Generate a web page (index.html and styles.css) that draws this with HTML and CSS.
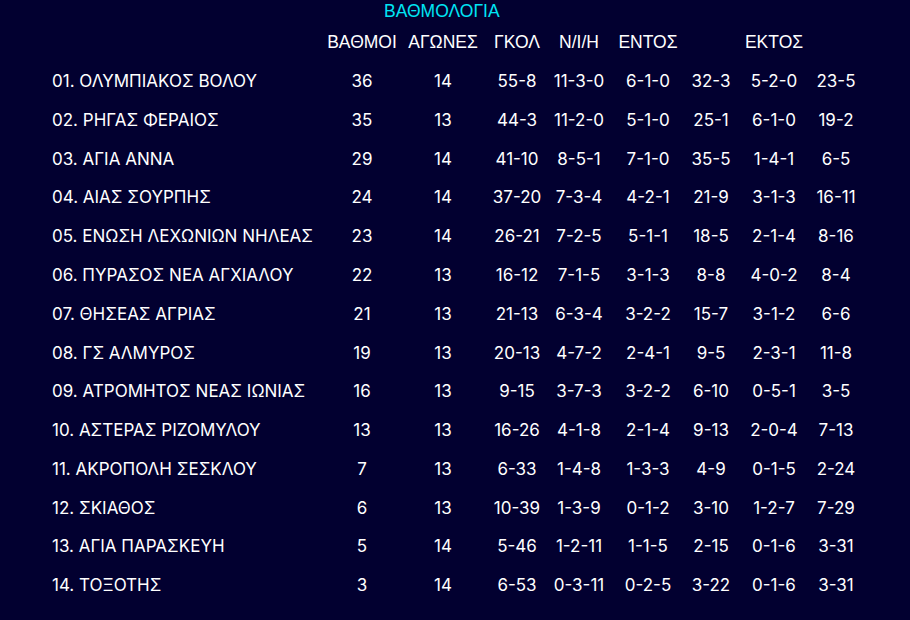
FILE: index.html
```html
<!DOCTYPE html>
<html lang="el">
<head>
<meta charset="utf-8">
<title>ΒΑΘΜΟΛΟΓΙΑ</title>
<link rel="stylesheet" href="styles.css">
</head>
<body>
<div class="title">ΒΑΘΜΟΛΟΓΙΑ</div>
<div class="standings">
  <div class="row head">
    <span class="name"></span><span>ΒΑΘΜΟΙ</span><span>ΑΓΩΝΕΣ</span><span>ΓΚΟΛ</span><span>Ν/Ι/Η</span><span>ΕΝΤΟΣ</span><span></span><span>ΕΚΤΟΣ</span><span></span>
  </div>
  <div class="row"><span class="name">01. ΟΛΥΜΠΙΑΚΟΣ ΒΟΛΟΥ</span><span>36</span><span>14</span><span>55-8</span><span>11-3-0</span><span>6-1-0</span><span>32-3</span><span>5-2-0</span><span>23-5</span></div>
  <div class="row"><span class="name">02. ΡΗΓΑΣ ΦΕΡΑΙΟΣ</span><span>35</span><span>13</span><span>44-3</span><span>11-2-0</span><span>5-1-0</span><span>25-1</span><span>6-1-0</span><span>19-2</span></div>
  <div class="row"><span class="name">03. ΑΓΙΑ ΑΝΝΑ</span><span>29</span><span>14</span><span>41-10</span><span>8-5-1</span><span>7-1-0</span><span>35-5</span><span>1-4-1</span><span>6-5</span></div>
  <div class="row"><span class="name">04. ΑΙΑΣ ΣΟΥΡΠΗΣ</span><span>24</span><span>14</span><span>37-20</span><span>7-3-4</span><span>4-2-1</span><span>21-9</span><span>3-1-3</span><span>16-11</span></div>
  <div class="row"><span class="name">05. ΕΝΩΣΗ ΛΕΧΩΝΙΩΝ ΝΗΛΕΑΣ</span><span>23</span><span>14</span><span>26-21</span><span>7-2-5</span><span>5-1-1</span><span>18-5</span><span>2-1-4</span><span>8-16</span></div>
  <div class="row"><span class="name">06. ΠΥΡΑΣΟΣ ΝΕΑ ΑΓΧΙΑΛΟΥ</span><span>22</span><span>13</span><span>16-12</span><span>7-1-5</span><span>3-1-3</span><span>8-8</span><span>4-0-2</span><span>8-4</span></div>
  <div class="row"><span class="name">07. ΘΗΣΕΑΣ ΑΓΡΙΑΣ</span><span>21</span><span>13</span><span>21-13</span><span>6-3-4</span><span>3-2-2</span><span>15-7</span><span>3-1-2</span><span>6-6</span></div>
  <div class="row"><span class="name">08. ΓΣ ΑΛΜΥΡΟΣ</span><span>19</span><span>13</span><span>20-13</span><span>4-7-2</span><span>2-4-1</span><span>9-5</span><span>2-3-1</span><span>11-8</span></div>
  <div class="row"><span class="name">09. ΑΤΡΟΜΗΤΟΣ ΝΕΑΣ ΙΩΝΙΑΣ</span><span>16</span><span>13</span><span>9-15</span><span>3-7-3</span><span>3-2-2</span><span>6-10</span><span>0-5-1</span><span>3-5</span></div>
  <div class="row"><span class="name">10. ΑΣΤΕΡΑΣ ΡΙΖΟΜΥΛΟΥ</span><span>13</span><span>13</span><span>16-26</span><span>4-1-8</span><span>2-1-4</span><span>9-13</span><span>2-0-4</span><span>7-13</span></div>
  <div class="row"><span class="name">11. ΑΚΡΟΠΟΛΗ ΣΕΣΚΛΟΥ</span><span>7</span><span>13</span><span>6-33</span><span>1-4-8</span><span>1-3-3</span><span>4-9</span><span>0-1-5</span><span>2-24</span></div>
  <div class="row"><span class="name">12. ΣΚΙΑΘΟΣ</span><span>6</span><span>13</span><span>10-39</span><span>1-3-9</span><span>0-1-2</span><span>3-10</span><span>1-2-7</span><span>7-29</span></div>
  <div class="row"><span class="name">13. ΑΓΙΑ ΠΑΡΑΣΚΕΥΗ</span><span>5</span><span>14</span><span>5-46</span><span>1-2-11</span><span>1-1-5</span><span>2-15</span><span>0-1-6</span><span>3-31</span></div>
  <div class="row"><span class="name">14. ΤΟΞΟΤΗΣ</span><span>3</span><span>14</span><span>6-53</span><span>0-3-11</span><span>0-2-5</span><span>3-22</span><span>0-1-6</span><span>3-31</span></div>
</div>
</body>
</html>
```
FILE: styles.css
```css
html, body {
  margin: 0;
  padding: 0;
  background: #020030;
  height: 100%;
}
body {
  color: #ffffff;
  font-family: "Liberation Sans", Arial, sans-serif;
}
.title {
  height: 23px;
  line-height: 22px;
  font-size: 17.5px;
  color: #00e5f5;
  padding-left: 384px;
}
.standings {
  margin-left: 48px;
  width: 810px;
}
.row {
  display: grid;
  grid-template-columns: 274px 80px 82px 66px 58px 80px 46px 80px 44px;
  height: 38.77px;
  align-items: center;
  font-family: Inter, "Noto Sans", sans-serif;
  font-size: 17px;
}
.row span {
  text-align: center;
  white-space: nowrap;
}
.row .name {
  text-align: left;
  padding-left: 4px;
}
.row.head {
  font-family: "Liberation Sans", Arial, sans-serif;
  font-size: 17.5px;
}
```
